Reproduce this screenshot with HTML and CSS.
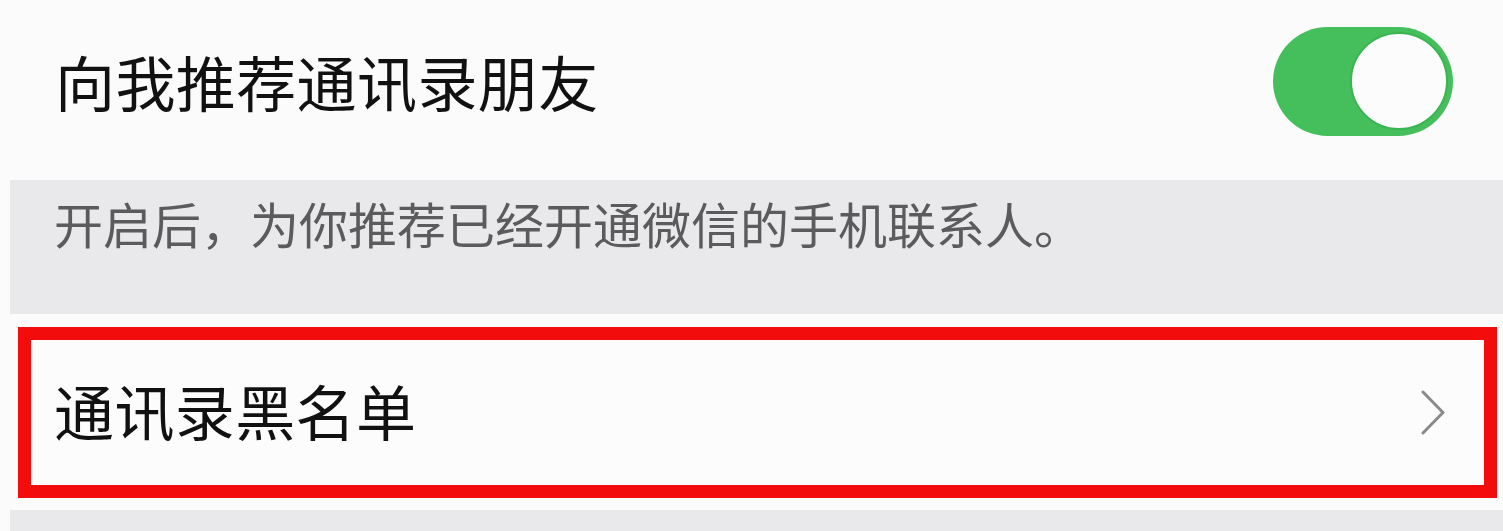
FILE: index.html
```html
<!DOCTYPE html>
<html lang="zh-CN">
<head>
<meta charset="utf-8">
<title>通讯录设置</title>
<link rel="stylesheet" href="styles.css">
</head>
<body>
  <div class="settings">
    <div class="cell cell-switch">
      <span class="cell-title">向我推荐通讯录朋友</span>
      <span class="switch is-on"><span class="switch-knob"></span></span>
    </div>
    <div class="tip">开启后，为你推荐已经开通微信的手机联系人。</div>
    <div class="cell cell-link marked">
      <span class="cell-title">通讯录黑名单</span>
      <svg class="chevron" width="26" height="45" viewBox="0 0 26 45" aria-hidden="true">
        <polyline points="3,2 23,22.5 3,43" fill="none" stroke="#8a8a8c" stroke-width="3" stroke-linecap="round" stroke-linejoin="round"/>
      </svg>
    </div>
    <div class="tip tip-tail"></div>
  </div>
</body>
</html>
```

FILE: styles.css
```css
html, body {
  margin: 0;
  padding: 0;
}

body {
  background: #fbfbfc;
  font-family: "Noto Sans CJK SC", "Noto Sans", sans-serif;
  color: #111;
  overflow: hidden;
}

.settings {
  display: flex;
  flex-direction: column;
  width: 1503px;
}

.cell {
  display: flex;
  align-items: center;
  justify-content: space-between;
}

.cell-title {
  font-size: 60px;
  line-height: 70px;
  letter-spacing: 0.4px;
}

.cell-switch {
  height: 168px;
  margin-bottom: 12px;
  padding: 0 50px 0 55px;
}

.cell-switch .cell-title {
  margin-top: -6px;
}

.switch {
  display: flex;
  justify-content: flex-end;
  align-items: center;
  box-sizing: border-box;
  width: 180px;
  height: 109px;
  padding: 0 5px;
  border-radius: 55px;
  background: #45bf5c;
  margin-top: -6px;
}

.switch-knob {
  display: block;
  box-sizing: border-box;
  width: 98px;
  height: 98px;
  border-radius: 50%;
  background: #fcfcfd;
  border: 2px solid #3bb452;
}

.tip {
  margin-left: 10px;
  height: 134px;
  box-sizing: border-box;
  padding: 13px 0 0 44px;
  background: #e9e9eb;
  color: #5b5b5d;
  font-size: 49px;
  line-height: 60px;
}

.marked {
  margin: 13px 6px 12px 18px;
  height: 171px;
  box-sizing: border-box;
  border: 13px solid #f20c0c;
  padding: 0 38px 0 23px;
  background: #fcfcfd;
}

.marked .cell-title {
  margin-top: -6px;
}

.chevron {
  display: block;
  flex: none;
}

.tip-tail {
  height: 21px;
  padding: 0;
}
```
